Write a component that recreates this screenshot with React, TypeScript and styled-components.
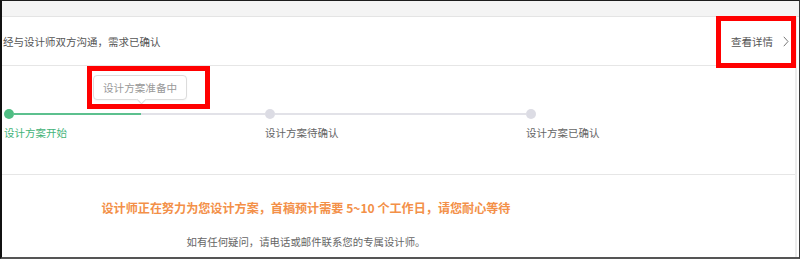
import React from "react";
import styled, { createGlobalStyle } from "styled-components";

const Global = createGlobalStyle`
  html, body { margin: 0; padding: 0; background: #fff; }
  body { font-family: "Microsoft YaHei", "Noto Sans CJK SC", "Noto Sans", sans-serif; }
  * { box-sizing: border-box; }
`;

const Frame = styled.div`
  position: relative;
  width: 800px;
  height: 259px;
  border-top: 1px solid #1c1c1c;
  border-left: 2px solid #111;
  border-right: 1px solid #3a3a3a;
  border-bottom: 2px solid #555;
  display: flex;
  flex-direction: column;
  overflow: hidden;
  background: #fff;
`;

const TopBand = styled.div`
  height: 16px;
  flex: none;
  background: #f4f4f4;
  border-bottom: 1px solid #e4e4e4;
`;

const Body = styled.div`
  flex: 1;
  display: flex;
  flex-direction: column;
  margin-right: 2px;
  border-right: 2px solid #ececec;
`;

const Header = styled.div`
  height: 49px;
  flex: none;
  display: flex;
  align-items: center;
  justify-content: space-between;
  padding: 0 6px 0 1px;
  border-bottom: 1px solid #e6e6e6;
  font-size: 10.5px;
  color: #555;
`;

const DetailLink = styled.a`
  display: flex;
  align-items: center;
  gap: 10px;
  color: #555;
  text-decoration: none;
  font-size: 10.5px;
`;

const Chevron = styled.svg`
  width: 6px;
  height: 11px;
  display: block;
`;

const StepsSection = styled.div`
  height: 109px;
  flex: none;
  border-bottom: 1px solid #e6e6e6;
  padding: 9px 0 0 2px;
`;

const BubbleRow = styled.div`
  display: flex;
  padding-left: 89px;
`;

const Bubble = styled.div`
  position: relative;
  height: 25px;
  padding: 0 9px;
  display: flex;
  align-items: center;
  border: 1px solid #dcdcdc;
  border-radius: 4px;
  background: #fff;
  font-size: 10.6px;
  color: #999;
  box-shadow: 0 1px 2px rgba(0, 0, 0, 0.04);

  &::after {
    content: "";
    position: absolute;
    left: 44px;
    bottom: -4px;
    width: 6px;
    height: 6px;
    background: #fff;
    border-right: 1px solid #dcdcdc;
    border-bottom: 1px solid #dcdcdc;
    transform: rotate(45deg);
  }
`;

const Track = styled.div`
  display: flex;
  margin-top: 9px;
`;

const Step = styled.div<{ $w?: number }>`
  display: flex;
  flex-direction: column;
  width: ${(p) => (p.$w ? `${p.$w}px` : "auto")};
`;

const StepHead = styled.div`
  display: flex;
  align-items: center;
  height: 10px;
`;

const Dot = styled.span<{ $active?: boolean }>`
  width: 10px;
  height: 10px;
  border-radius: 50%;
  flex: none;
  background: ${(p) => (p.$active ? "#4fbd83" : "#dcdce4")};
`;

const Connector = styled.span`
  flex: 1;
  height: 2px;
  background: #e2e2e8;
`;

const StepLabel = styled.div<{ $active?: boolean }>`
  margin-top: 7px;
  font-size: 10.5px;
  line-height: 14px;
  white-space: nowrap;
  color: ${(p) => (p.$active ? "#43b378" : "#666")};
`;

const Notice = styled.div`
  width: 608px;
  padding-top: 25px;
  text-align: center;
`;

const NoticeTitle = styled.div`
  font-size: 12.1px;
  line-height: 16px;
  font-weight: bold;
  color: #f39048;
`;

const NoticeSub = styled.div`
  margin-top: 19px;
  font-size: 10.4px;
  line-height: 14px;
  color: #666;
`;

const Highlight = styled.div<{ $l: number; $t: number; $w: number; $h: number }>`
  position: absolute;
  left: ${(p) => p.$l}px;
  top: ${(p) => p.$t}px;
  width: ${(p) => p.$w}px;
  height: ${(p) => p.$h}px;
  border: 5px solid #ff0000;
  pointer-events: none;
`;

const steps = [
  { label: "设计方案开始", active: true, progress: 127 },
  { label: "设计方案待确认", active: false, progress: 0 },
  { label: "设计方案已确认", active: false, progress: 0 },
];

export default function App() {
  return (
    <>
      <Global />
      <Frame>
        <TopBand />
        <Body>
          <Header>
            <span>经与设计师双方沟通，需求已确认</span>
            <DetailLink href="#">
              查看详情
              <Chevron viewBox="0 0 6 11">
                <path d="M0.8 0.8 L5 5.5 L0.8 10.2" fill="none" stroke="#777" strokeWidth="1" />
              </Chevron>
            </DetailLink>
          </Header>
          <StepsSection>
            <BubbleRow>
              <Bubble>设计方案准备中</Bubble>
            </BubbleRow>
            <Track>
              {steps.map((s, i) => (
                <Step key={s.label} $w={i < steps.length - 1 ? 261 : undefined}>
                  <StepHead>
                    <Dot $active={s.active} />
                    {i < steps.length - 1 && (
                      <Connector
                        style={
                          s.progress
                            ? {
                                background: `linear-gradient(to right, #5cc08e ${s.progress}px, #e2e2e8 ${s.progress}px)`,
                              }
                            : undefined
                        }
                      />
                    )}
                  </StepHead>
                  <StepLabel $active={s.active}>{s.label}</StepLabel>
                </Step>
              ))}
            </Track>
          </StepsSection>
          <Notice>
            <NoticeTitle>设计师正在努力为您设计方案，首稿预计需要 5~10 个工作日，请您耐心等待</NoticeTitle>
            <NoticeSub>如有任何疑问，请电话或邮件联系您的专属设计师。</NoticeSub>
          </Notice>
        </Body>
        <Highlight $l={85} $t={65} $w={123} $h={43} />
        <Highlight $l={714} $t={15} $w={80} $h={52} />
      </Frame>
    </>
  );
}
